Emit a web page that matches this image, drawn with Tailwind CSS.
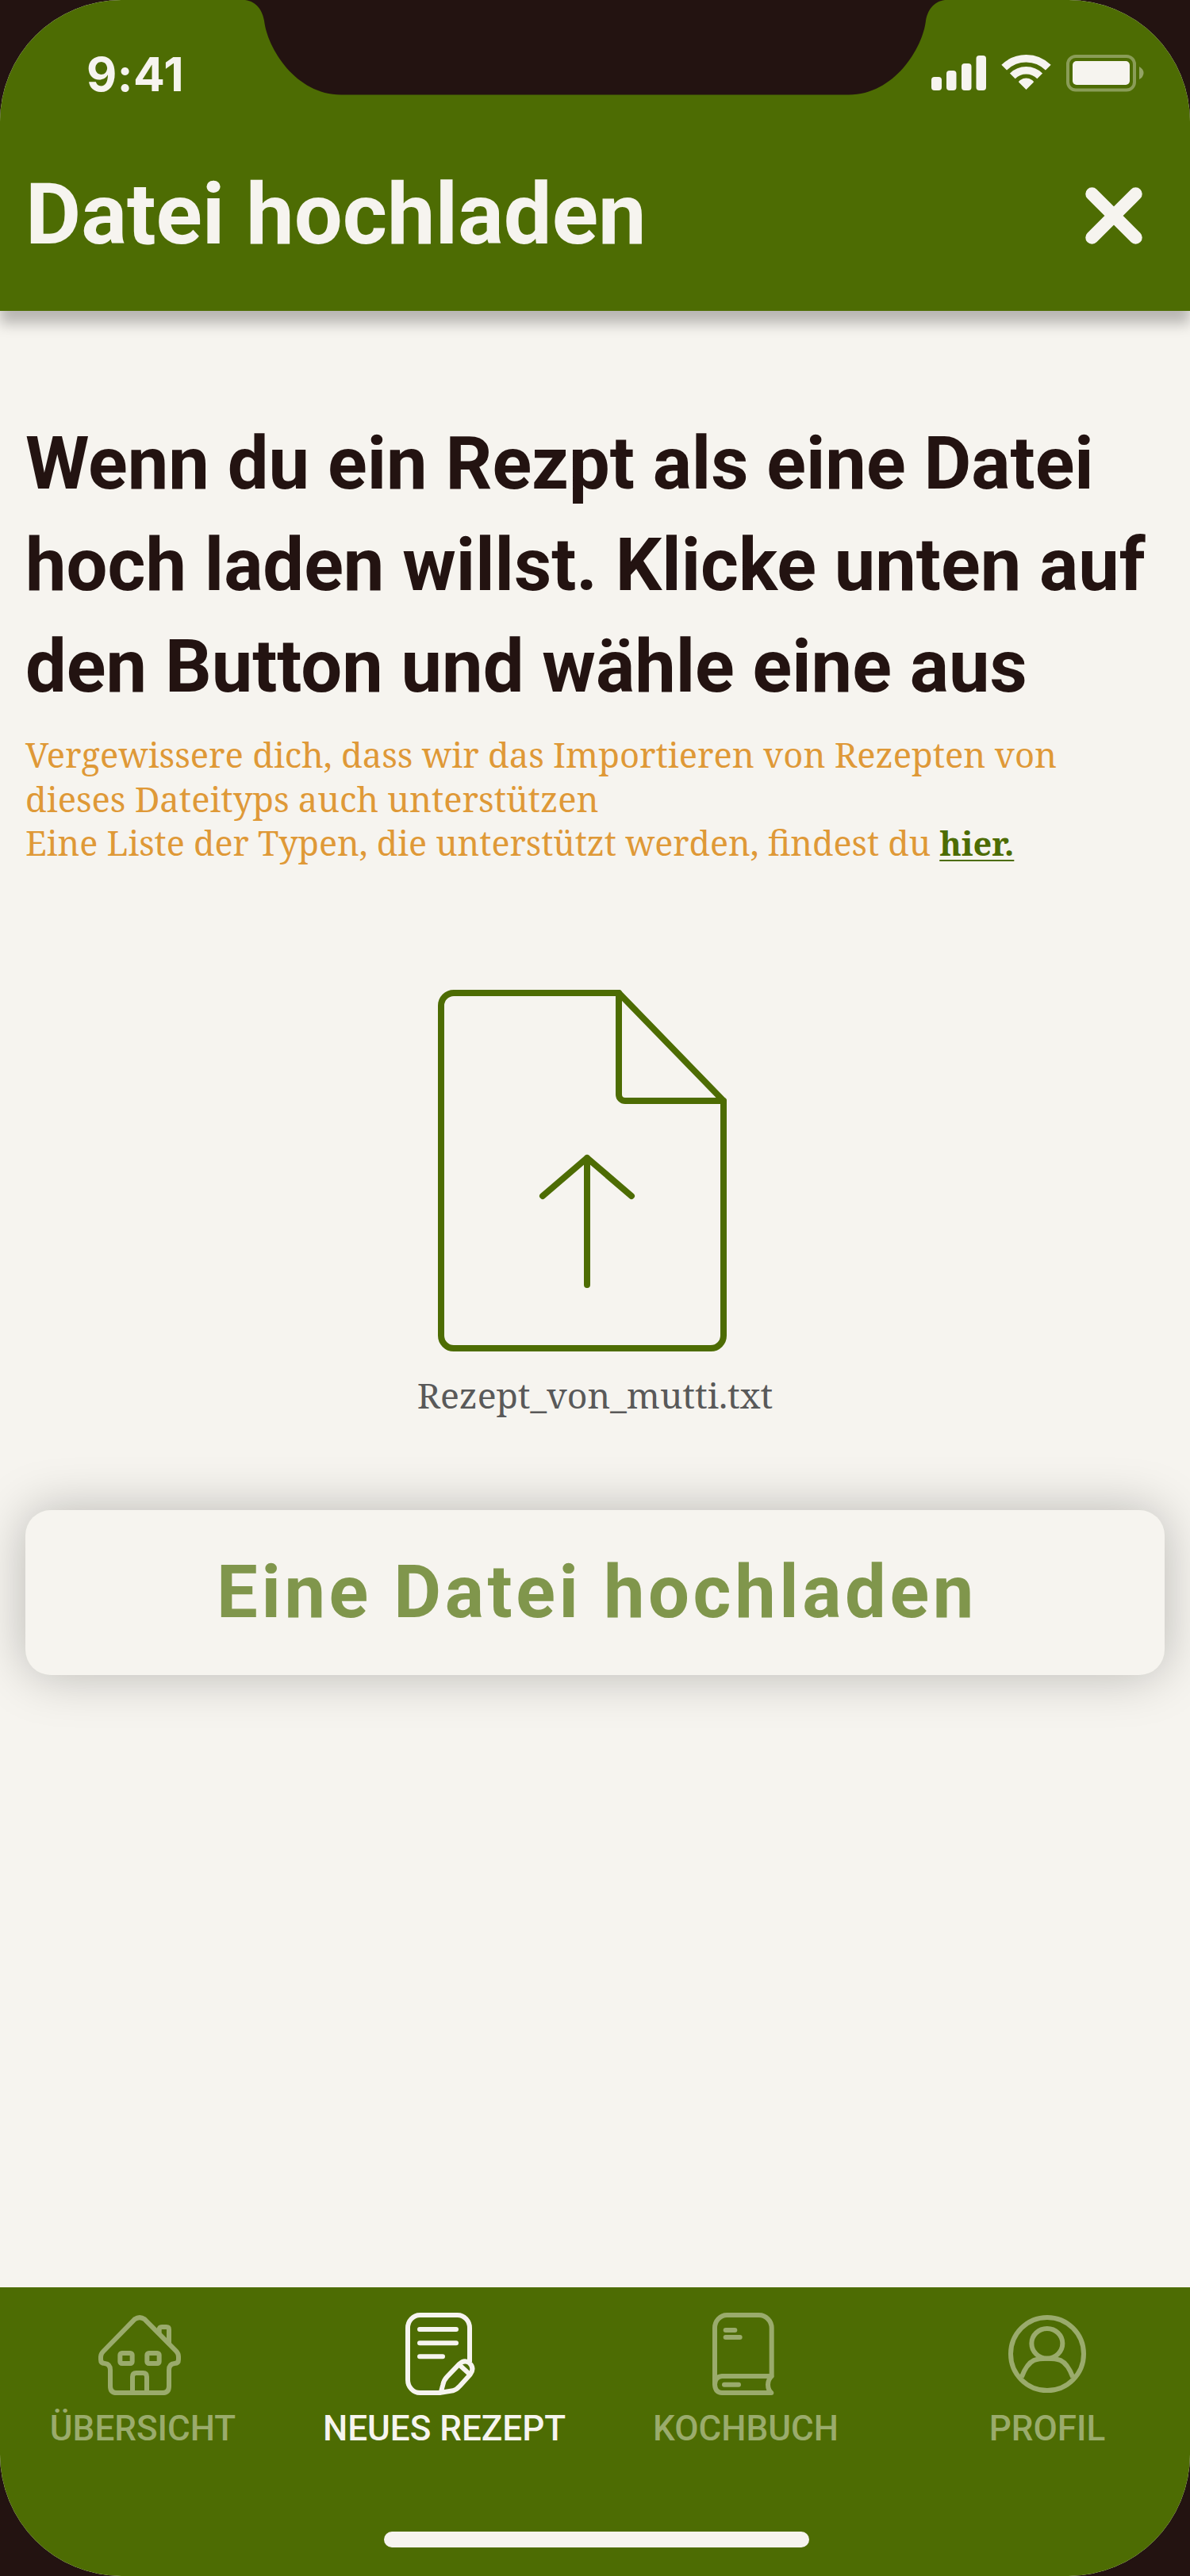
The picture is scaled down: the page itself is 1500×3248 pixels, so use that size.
<!DOCTYPE html>
<html lang="de">
<head>
<meta charset="utf-8">
<title>Datei hochladen</title>
<script src="https://cdn.jsdelivr.net/npm/@tailwindcss/browser@4"></script>
</head>
<body class="bg-[#231311]">
<div class="relative flex h-[3248px] w-[1500px] flex-col overflow-hidden rounded-[153px] bg-[#f6f4ef] font-['Roboto',sans-serif] text-[#231311]">

  <header class="relative z-10 flex h-[392px] shrink-0 flex-col bg-[#4d6c03] text-[#f6f4ef] shadow-[0_16px_16px_rgba(0,0,0,0.25)]">
    <!-- notch -->
    <svg class="absolute left-0 top-0 h-[120px] w-[1500px]" viewBox="0 0 1500 120" fill="#231311"><path d="M309 0C324 2 331 14 333 26C337 61 373 119.500 430 119.500H1070C1127 119.500 1163 61 1167 26C1169 14 1176 2 1191 0Z"/></svg>

    <!-- status bar -->
    <div class="flex h-[206px] items-start justify-between pl-[109px] pr-[58px] pt-16">
      <span class="font-['Inter',sans-serif] text-[59px] leading-[60px] font-bold tracking-[0.5px]">9:41</span>
      <svg class="mt-0.5 h-[52px] w-[268px]" viewBox="1174 66 268 52" fill="#f6f4ef">
        <rect x="1174" y="97" width="13" height="17" rx="4"/>
        <rect x="1193" y="89" width="12.500" height="25" rx="4"/>
        <rect x="1212" y="80" width="12.500" height="34" rx="4"/>
        <rect x="1230.500" y="70" width="12.500" height="44" rx="4"/>
        <g fill="none" stroke="#f6f4ef" stroke-width="9.500">
          <path d="M1265.700 85.200A39.300 39.300 0 0 1 1321.300 85.200"/>
          <path d="M1276.300 95.800A24.300 24.300 0 0 1 1310.700 95.800"/>
        </g>
        <path d="M1293.500 113L1284 103.500Q1284 102 1286 101A14 14 0 0 1 1301 101Q1303 102 1303 103.500Z"/>
        <rect x="1346" y="71" width="84" height="42.500" rx="10" fill="none" stroke="#f6f4ef" stroke-width="4" opacity="0.36"/>
        <path d="M1436 84V100Q1441.500 97 1441.500 92Q1441.500 87 1436 84Z" opacity="0.42"/>
        <rect x="1352" y="77" width="72" height="30" rx="5"/>
      </svg>
    </div>

    <!-- title row -->
    <div class="flex h-32 items-center justify-between pl-8 pr-[60px]">
      <h1 class="text-[108px] leading-[128px] font-bold">Datei hochladen</h1>
      <svg class="mt-1 size-[72px]" viewBox="0 0 72 72" fill="none" stroke="#f6f4ef" stroke-width="16.500" stroke-linecap="round"><path d="M8.500 8.500L63.500 63.500M63.500 8.500L8.500 63.500"/></svg>
    </div>
  </header>

  <main class="flex grow flex-col px-8 pt-[129px]">
    <h2 class="text-[92px] leading-[128px] font-bold whitespace-nowrap">Wenn du ein Rezpt als eine Datei<br>hoch laden willst. Klicke unten auf<br>den Button und wähle eine aus</h2>

    <p class="mt-[18px] flex flex-col font-['Roboto_Slab','Noto_Serif',serif] text-[43.5px] leading-[56px] whitespace-nowrap text-[#df9937]">
      <span>Vergewissere dich, dass wir das Importieren von Rezepten von</span>
      <span>dieses Dateityps auch unterstützen</span>
      <span class="text-[43.05px]">Eine Liste der Typen, die unterstützt werden, findest du <a class="text-[41.5px] font-bold text-[#4d6c03] underline decoration-2 underline-offset-[5px]">hier.</a></span>
    </p>

    <figure class="mt-[147px] flex flex-col items-center">
      <svg class="h-[480px] w-[396px]" viewBox="552 1238 396 480" fill="none" stroke="#4d6c03" stroke-width="8" stroke-linecap="round" stroke-linejoin="round">
        <path d="M780 1252H572A16 16 0 0 0 556 1268V1684A16 16 0 0 0 572 1700H896A16 16 0 0 0 912 1684V1388Z"/>
        <path d="M780 1252V1380A8 8 0 0 0 788 1388H912"/>
        <path d="M740 1620V1460M684 1508L740 1460L796 1508"/>
      </svg>
      <figcaption class="mt-[13px] font-['Roboto_Slab','Noto_Serif',serif] text-[44.6px] leading-[56px] text-[#595959]">Rezept_von_mutti.txt</figcaption>
    </figure>

    <button class="mt-[117px] flex h-[208px] items-center justify-center rounded-[32px] bg-[#f6f4ef] pl-[5px] text-[92px] font-bold tracking-[0.05em] text-[#80964c] shadow-[0_0_64px_rgba(0,0,0,0.25)]">Eine Datei hochladen</button>
  </main>

  <nav class="flex h-[364px] shrink-0 flex-col items-center bg-[#4d6c03] pt-8 text-[44px] leading-[56px] font-medium text-[#9aab6c]">
    <div class="grid grid-cols-[repeat(4,380px)]">
      <a class="flex flex-col items-center gap-3.5">
        <svg class="h-[104px] w-[120px]" viewBox="360 168 360 312" fill="none" stroke="currentColor" stroke-width="18">
          <path d="M381 335Q381 324 390 315L509 193Q528 180 547 193L666 313Q675 322 675 335V345Q675 360 660 360Q639 362 639 385V446Q639 471 614 471H442Q417 471 417 446V385Q417 362 396 360Q381 360 381 345Z"/>
          <path d="M602 246V233Q602 222 612 222H629Q639 222 639 232V290"/>
          <rect x="454" y="321" width="46" height="39" rx="7"/>
          <rect x="556" y="321" width="46" height="39" rx="7"/>
          <path d="M501 471V410Q501 396 515 396H541Q555 396 555 410V471"/>
        </svg>
        <span>ÜBERSICHT</span>
      </a>
      <a class="flex flex-col items-center gap-3.5 text-[#f6f4ef]">
        <svg class="h-[104px] w-[120px]" viewBox="360 168 360 312" fill="none" stroke="currentColor" stroke-width="18">
          <path d="M636 354V226A46 49 0 0 0 590 177H448A46 49 0 0 0 402 226V422A46 49 0 0 0 448 471H527"/>
          <path stroke-linecap="round" d="M447 231H585M447 283H585M447 334H534"/>
          <path stroke-linejoin="round" d="M527 470L535 440Q539 422 551 410L597 362Q616 344 635 358Q656 378 638 402L598 446Q587 459 573 463Z"/>
          <path d="M598 366L636 401"/>
        </svg>
        <span>NEUES REZEPT</span>
      </a>
      <a class="flex flex-col items-center gap-3.5">
        <svg class="h-[104px] w-[120px]" viewBox="300 168 360 312" fill="none" stroke="currentColor" stroke-width="18" stroke-linecap="round" stroke-linejoin="round">
          <path d="M363 440V226A46 49 0 0 1 409 177H530A48 49 0 0 1 578 226V408H390Q363 410 363 440Q365 471 390 471H577Q564 460 564 440Q564 422 578 408"/>
          <path d="M404 234H439M404 261H458M399 440H453"/>
        </svg>
        <span>KOCHBUCH</span>
      </a>
      <a class="flex flex-col items-center gap-3.5">
        <svg class="h-[104px] w-[120px]" viewBox="390 168 360 312" fill="none" stroke="currentColor" stroke-width="18">
          <circle cx="570" cy="324" r="138"/>
          <ellipse cx="569.500" cy="284.500" rx="58.500" ry="56.500"/>
          <path d="M473 412Q492 361 520 348Q536 341 570 341Q604 341 620 348Q648 361 667 412"/>
        </svg>
        <span>PROFIL</span>
      </a>
    </div>
    <div class="mt-[102px] ml-1 h-5 w-[536px] shrink-0 rounded-[10px] bg-[#f6f4ef]"></div>
  </nav>
</div>
</body>
</html>
